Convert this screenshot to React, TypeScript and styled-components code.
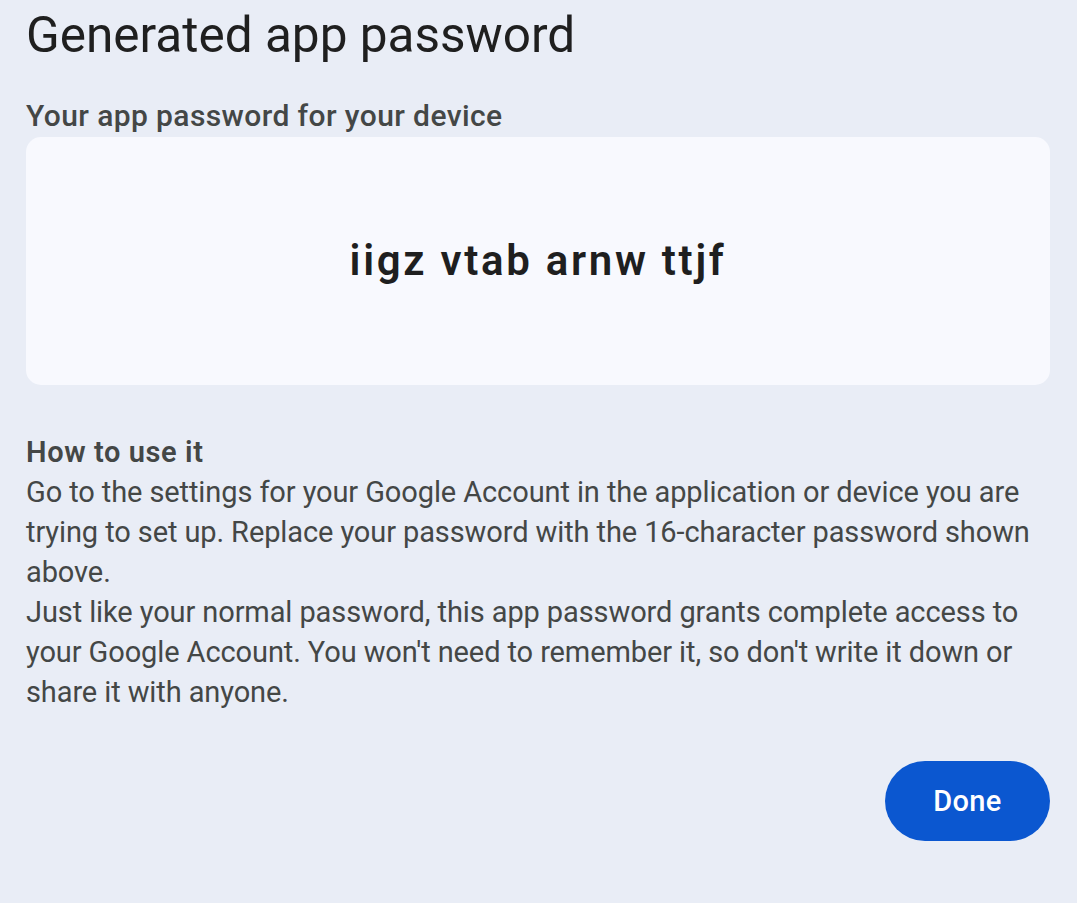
import React from "react";
import styled, { createGlobalStyle } from "styled-components";

const Global = createGlobalStyle`
  html, body {
    margin: 0;
    padding: 0;
    background: #e9edf6;
  }
  body {
    font-family: Roboto, "Noto Sans", Arial, sans-serif;
    -webkit-font-smoothing: antialiased;
  }
`;

const Page = styled.main`
  box-sizing: border-box;
  width: 1077px;
  min-height: 903px;
  padding: 5px 27px 0 26px;
  display: flex;
  flex-direction: column;
  background: #e9edf6;
`;

const Title = styled.h1`
  margin: 0;
  font-size: 49.5px;
  line-height: 60px;
  font-weight: 400;
  color: #1f1f1f;
`;

const Label = styled.h2`
  margin: 33px 0 0;
  font-size: 30px;
  line-height: 36px;
  font-weight: 500;
  letter-spacing: 0.4px;
  color: #444746;
`;

const PasswordCard = styled.div`
  margin-top: 3px;
  height: 248px;
  border-radius: 15px;
  background: #f8f9fe;
  display: flex;
  align-items: center;
  justify-content: center;
`;

const PasswordText = styled.span`
  font-size: 42px;
  line-height: 48px;
  font-weight: 600;
  color: #1f1f1f;
  letter-spacing: 2.7px;
`;

const Section = styled.section`
  margin-top: 47px;
  color: #444746;
  font-size: 29px;
  line-height: 40px;
  letter-spacing: -0.1px;
`;

const SectionTitle = styled.h3`
  margin: 0;
  font-size: 29px;
  line-height: 40px;
  font-weight: 600;
  letter-spacing: 0.6px;
  color: #444746;
`;

const Paragraph = styled.p`
  margin: 0;
`;

const Actions = styled.div`
  margin-top: 49px;
  display: flex;
  justify-content: flex-end;
`;

const DoneButton = styled.button`
  width: 165px;
  height: 80px;
  border: none;
  border-radius: 40px;
  background: #0b57d0;
  color: #ffffff;
  font-family: inherit;
  font-size: 29px;
  font-weight: 500;
  letter-spacing: 0.3px;
  cursor: pointer;
`;

export default function App() {
  return (
    <>
      <Global />
      <Page>
        <Title>Generated app password</Title>
        <Label>Your app password for your device</Label>
        <PasswordCard>
          <PasswordText>iigz vtab arnw ttjf</PasswordText>
        </PasswordCard>
        <Section>
          <SectionTitle>How to use it</SectionTitle>
          <Paragraph>
            Go to the settings for your Google Account in the application or device you are
            trying to set up. Replace your password with the 16-character password shown
            above.
          </Paragraph>
          <Paragraph>
            Just like your normal password, this app password grants complete access to
            your Google Account. You won't need to remember it, so don't write it down or
            share it with anyone.
          </Paragraph>
        </Section>
        <Actions>
          <DoneButton>Done</DoneButton>
        </Actions>
      </Page>
    </>
  );
}
